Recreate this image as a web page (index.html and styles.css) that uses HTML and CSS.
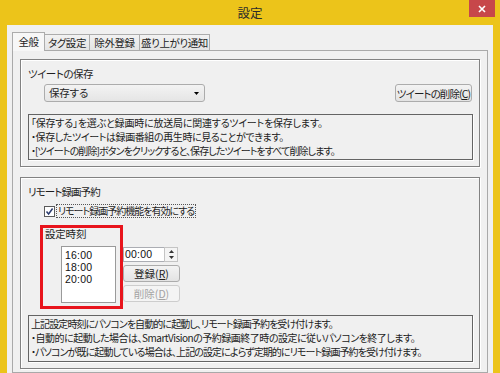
FILE: index.html
```html
<!DOCTYPE html>
<html lang="ja">
<head>
<meta charset="utf-8">
<title>設定</title>
<link rel="stylesheet" href="styles.css">
</head>
<body>
<div class="window">
  <div class="titlebar">
    <div></div>
    <div class="title">設定</div>
    <div class="close">
      <svg width="8" height="8" viewBox="0 0 8 8"><path d="M1 1L7 7M7 1L1 7" stroke="#fff" stroke-width="1.6" fill="none"/></svg>
    </div>
  </div>
  <div class="client">
    <div class="tabs">
      <div class="tab active tw1">全般</div>
      <div class="tab tw2">タグ設定</div>
      <div class="tab tw3">除外登録</div>
      <div class="tab tw4">盛り上がり通知</div>
    </div>
    <div class="panel">
      <section class="group g1">
        <div class="gtitle t2">ツイートの保存</div>
        <div class="row1">
          <div class="combo">
            <span>保存する</span>
            <svg width="5" height="3" viewBox="0 0 5 3"><path d="M0 0H5L2.5 3Z" fill="#000"/></svg>
          </div>
          <button class="btn btn-tweet t1">ツイートの削除(<u>C</u>)</button>
        </div>
        <div class="info">
          <p>「保存する」を選ぶと録画時に放送局に関連するツイートを保存します。</p>
          <p class="t3">・保存したツイートは録画番組の再生時に見ることができます。</p>
          <p class="t1">・[ツイートの削除]ボタンをクリックすると、保存したツイートをすべて削除します。</p>
        </div>
      </section>
      <section class="group g2">
        <div class="gtitle t1">リモート録画予約</div>
        <div class="check">
          <span class="cbox">
            <svg width="9" height="9" viewBox="0 0 9 9"><path d="M1.5 4.5L3.6 7L7.6 1.5" stroke="#2a3b6e" stroke-width="1.5" fill="none"/></svg>
          </span>
          <span class="focus">リモート録画予約機能を有効にする</span>
        </div>
        <div class="sched">
          <div class="slabel">設定時刻</div>
          <div class="srow">
            <div class="list">
              <div>16:00</div>
              <div>18:00</div>
              <div>20:00</div>
            </div>
            <div class="ctrls">
              <div class="time">
                <span class="tval">00:00</span>
                <span class="spin">
                  <svg width="5" height="3" viewBox="0 0 5 3"><path d="M0 3H5L2.5 0Z" fill="#333"/></svg>
                  <svg width="5" height="3" viewBox="0 0 5 3"><path d="M0 0H5L2.5 3Z" fill="#333"/></svg>
                </span>
              </div>
              <button class="btn btn-small">登録(<u>R</u>)</button>
              <button class="btn btn-small disabled">削除(<u>D</u>)</button>
            </div>
          </div>
          <div class="redbox"></div>
        </div>
        <div class="info info2">
          <p class="t1">上記設定時刻にパソコンを自動的に起動し、リモート録画予約を受け付けます。</p>
          <p class="t2">・自動的に起動した場合は、SmartVisionの予約録画終了時の設定に従いパソコンを終了します。</p>
          <p class="t1">・パソコンが既に起動している場合は、上記の設定によらず定期的にリモート録画予約を受け付けます。</p>
        </div>
      </section>
    </div>
  </div>
</div>
</body>
</html>
```

FILE: styles.css
```css
* { box-sizing: border-box; margin: 0; padding: 0; }
html, body { width: 500px; height: 373px; overflow: hidden; }
body {
  background: #ecc41a;
  font-family: "Noto Sans CJK JP", "Noto Sans", sans-serif;
  font-size: 10px;
  letter-spacing: -0.2px;
  color: #1e1e1e;
  font-feature-settings: "palt";
}
.t1 { letter-spacing: -0.9px; }
.t2 { letter-spacing: -0.5px; }
.t3 { letter-spacing: -0.4px; }
.window { height: 373px; display: flex; flex-direction: column; }
.titlebar {
  height: 25px;
  flex: none;
  display: grid;
  grid-template-columns: 1fr auto 1fr;
  align-items: start;
}
.title { font-size: 12.5px; letter-spacing: 0; line-height: 26px; color: #2b2b2b; }
.close {
  justify-self: end;
  margin-right: 5px;
  width: 26px;
  height: 17px;
  background: #c7474a;
  display: flex;
  align-items: center;
  justify-content: center;
}
.close svg { display: block; }
.client {
  flex: 1;
  margin: 0 7px;
  background: #f0f0f0;
  padding: 7px 5px 0;
  display: flex;
  flex-direction: column;
}
.tabs { display: flex; height: 18px; position: relative; z-index: 1; flex: none; }
.tab {
  height: 16px;
  margin-top: 2px;
  margin-left: -1px;
  border: 1px solid #acacac;
  border-bottom: none;
  background: linear-gradient(#f2f2f2, #e4e4e4);
  line-height: 15px;
  white-space: nowrap;
  text-align: center;
  font-size: 10.5px;
  letter-spacing: -0.4px;
}
.tab.active {
  margin-left: 0;
  height: 19px;
  margin-top: 0;
  padding-top: 1px;
  background: #f7f7f7;
}
.tw1 { width: 33px; }
.tw2 { width: 46px; }
.tw3 { width: 51px; }
.tw4 { width: 71px; }
.panel {
  flex: 1;
  border: 1px solid #a9a9a9;
  background: #f0f0f0;
  padding: 8px 7px 0;
}
.group {
  border: 1px solid #828282;
  box-shadow: inset 1px 1px 0 #fff, 1px 1px 0 #fff;
  padding: 7px 6px 6px 7px;
}
.g2 { margin-top: 10px; }
.gtitle { line-height: 14px; height: 14px; font-size: 10.5px; }
.row1 {
  margin-top: 3px;
  display: flex;
  justify-content: space-between;
  align-items: center;
  height: 18px;
}
.combo {
  width: 161px;
  height: 18px;
  margin-left: 16px;
  border: 1px solid #acacac;
  border-radius: 3px;
  background: linear-gradient(#f3f3f3, #e5e5e5);
  display: flex;
  align-items: center;
  justify-content: space-between;
  padding: 0 5px 0 4px;
  line-height: 16px;
  font-size: 10.5px;
}
.combo svg { display: block; }
.btn {
  font-family: inherit;
  font-size: 10.5px;
  font-feature-settings: "palt";
  color: #1e1e1e;
  border: 1px solid #acacac;
  border-radius: 3px;
  background: linear-gradient(#f3f3f3, #e3e3e3);
  line-height: 15px;
  white-space: nowrap;
}
.btn-tweet { width: 77px; height: 18px; margin-right: 1px; padding: 0; }
.info {
  margin-top: 12px;
  height: 46px;
  border: 1px solid #646464;
  box-shadow: 1px 1px 0 #fff;
  padding: 1px 0 0 2px;
  line-height: 14px;
  color: #222;
  white-space: nowrap;
}
.check {
  display: flex;
  align-items: center;
  margin: 5px 0 0 16px;
  height: 14px;
}
.cbox {
  width: 11px;
  height: 11px;
  border: 1px solid #5a5a5a;
  background: #fff;
  display: flex;
  align-items: center;
  justify-content: center;
}
.cbox svg { display: block; }
.focus {
  margin-left: 1px;
  border: 1px dotted #555;
  padding: 0 1px;
  line-height: 12px;
  font-size: 10px;
  letter-spacing: -1px;
}
.sched { position: relative; margin: 7px 0 0 17px; padding-top: 2px; }
.slabel { line-height: 14px; height: 14px; font-size: 10.5px; }
.srow { display: flex; margin-top: 5px; align-items: flex-start; }
.list {
  margin-left: 16px;
  width: 55px;
  height: 57px;
  background: #fff;
  border: 1px solid #9a9a9a;
  padding: 2px 0 0 3px;
  font-family: "Liberation Sans", sans-serif;
  font-size: 10.5px;
  letter-spacing: 0.2px;
  line-height: 12px;
  color: #111;
}
.ctrls { margin-left: 7px; margin-top: 1px; display: flex; flex-direction: column; gap: 3px; width: 57px; }
.time { display: flex; height: 15px; width: 55px; }
.tval {
  width: 41px;
  background: #fff;
  border: 1px solid #abadb3;
  border-right: none;
  font-family: "Liberation Sans", sans-serif;
  font-size: 10.5px;
  letter-spacing: 0.2px;
  line-height: 13px;
  padding-left: 1px;
  color: #111;
}
.spin {
  width: 14px;
  border: 1px solid #c4c4c4;
  background: #f4f4f4;
  display: flex;
  flex-direction: column;
  align-items: center;
  justify-content: space-around;
}
.spin svg { display: block; }
.btn-small { width: 57px; height: 17px; }
.btn.disabled { color: #a3a3a3; border-color: #cdcdcd; background: #f4f4f4; }
.redbox {
  position: absolute;
  left: -5px;
  top: 0;
  width: 83px;
  height: 84px;
  border: 3px solid #e8141c;
}
.info2 { margin-top: 12px; height: 47px; }
```
